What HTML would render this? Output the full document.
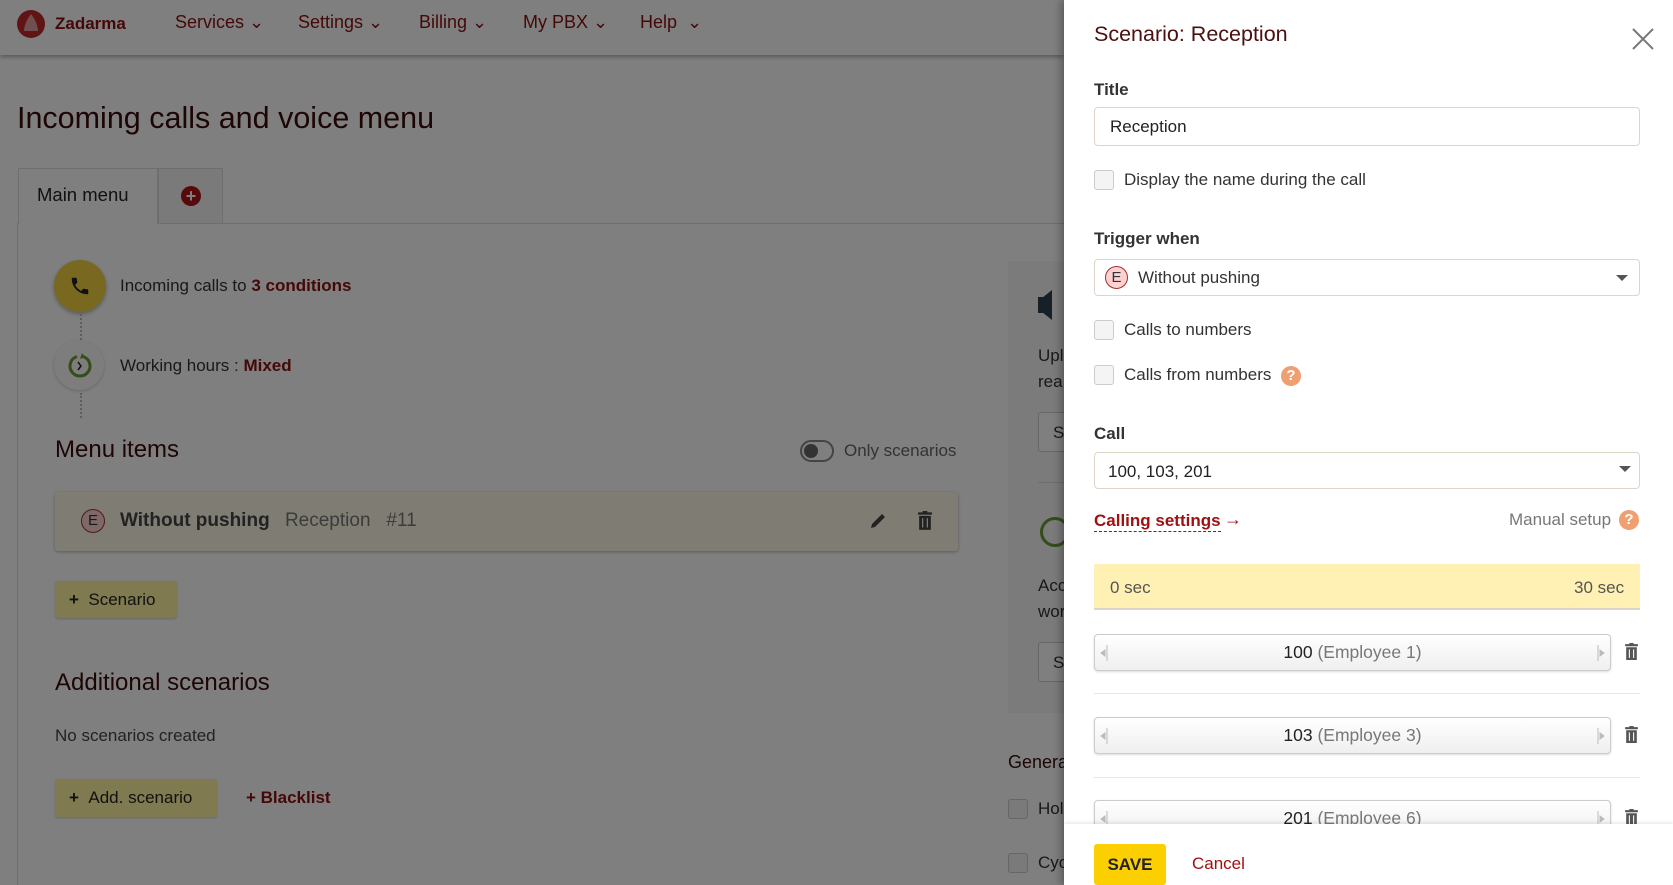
<!DOCTYPE html>
<html><head><meta charset="utf-8"><style>
*{box-sizing:border-box;margin:0;padding:0}
body{width:1673px;height:885px;overflow:hidden;position:relative;font-family:"Liberation Sans",sans-serif;background:#fff;color:#333}
.a{position:absolute}
.nav{left:0;top:0;width:1064px;height:55px;background:#fff;box-shadow:0 2px 4px rgba(0,0,0,.3)}
.nav span{position:absolute;top:12px;font-size:18px;color:#8a1010}
.red{color:#8a1010}
.ov{left:0;top:0;width:1064px;height:885px;background:rgba(0,0,0,.5)}
.cb{width:20px;height:20px;border:1px solid #ccc;border-radius:3px;background:#f4f4f4}
.panel{left:1064px;top:0;width:609px;height:885px;background:#fff;box-shadow:-3px 0 8px rgba(0,0,0,.3)}
.lbl{font-size:17px;font-weight:bold;color:#333}
.inp{border:1px solid #ddd5c8;border-radius:4px;background:#fff}
.txt{font-size:17px;color:#333}
.help{width:20px;height:20px;border-radius:50%;background:#f0a070;color:#fff;font-weight:bold;font-size:15px;text-align:center;line-height:20px}
.row{left:30px;width:517px;height:37px;border:1px solid #ccc;border-radius:4px;background:linear-gradient(#fff,#efefef);box-shadow:0 1px 2px rgba(0,0,0,.15);text-align:center;font-size:17.5px;line-height:35px;color:#222}
.row i{font-style:normal;color:#777}
.row svg{position:absolute;top:10px}
.tr{width:13px;height:17px;left:561px}
</style></head><body>
<div class="a nav">
<svg class="a" style="left:16px;top:9px" width="30" height="30" viewBox="0 0 30 30"><circle cx="15" cy="15" r="14" fill="#c0282d"/><path d="M15 5 C11 10 8 17 8 22 L22 22 C22 17 19 10 15 5Z" fill="#fff" opacity=".55"/></svg>
<span style="left:55px;font-weight:bold;font-size:17px;top:14px">Zadarma</span>
<span style="left:175px">Services ⌄</span>
<span style="left:298px">Settings ⌄</span>
<span style="left:419px">Billing ⌄</span>
<span style="left:523px">My PBX ⌄</span>
<span style="left:640px">Help &nbsp;⌄</span>
</div>
<div class="a" style="left:17px;top:101px;font-size:30.5px;color:#3a0a0a">Incoming calls and voice menu</div>
<div class="a" style="left:18px;top:168px;width:140px;height:56px;border:1px solid #ddd;border-bottom:none;background:#fff"></div>
<div class="a" style="left:37px;top:184px;font-size:18.5px;color:#222">Main menu</div>
<div class="a" style="left:158px;top:168px;width:65px;height:56px;border:1px solid #ddd;background:#f4f4f4"></div>
<div class="a" style="left:181px;top:186px;width:20px;height:20px;border-radius:50%;background:#b01515;color:#fff;font-weight:bold;text-align:center;line-height:20px;font-size:18px">+</div>
<div class="a" style="left:223px;top:223px;width:841px;border-top:1px solid #ddd"></div>
<div class="a" style="left:17px;top:223px;height:662px;border-left:1px solid #ddd"></div>
<div class="a" style="left:54px;top:260px;width:52px;height:52px;border-radius:50%;background:#f0d040;box-shadow:0 2px 4px rgba(0,0,0,.3)"></div>
<svg class="a" style="left:69px;top:275px" width="22" height="22" viewBox="0 0 24 24"><path d="M6.6 10.8c1.4 2.8 3.8 5.1 6.6 6.6l2.2-2.2c.3-.3.7-.4 1-.2 1.1.4 2.3.6 3.6.6.6 0 1 .4 1 1V20c0 .6-.4 1-1 1C10.6 21 3 13.4 3 4c0-.6.4-1 1-1h3.5c.6 0 1 .4 1 1 0 1.3.2 2.5.6 3.6.1.3 0 .7-.2 1L6.6 10.8z" fill="#222"/></svg>
<div class="a" style="left:80px;top:314px;height:26px;border-left:2px dotted #bbb"></div>
<div class="a" style="left:54px;top:340px;width:50px;height:50px;border-radius:50%;background:#fafafa;box-shadow:0 1px 3px rgba(0,0,0,.2)"></div>
<svg class="a" style="left:66px;top:352px" width="28" height="28" viewBox="0 0 28 28"><path d="M11 4.5 A10 10 0 1 0 17 4.5" fill="none" stroke="#6a9a30" stroke-width="3"/><path d="M16 1 L19 5 L14 7Z" fill="#6a9a30"/><path d="M12 10 L15 14 L12 18" fill="none" stroke="#222" stroke-width="1.5"/></svg>
<div class="a" style="left:80px;top:393px;height:25px;border-left:2px dotted #bbb"></div>
<div class="a txt" style="left:120px;top:276px">Incoming calls to <span class="red" style="font-weight:bold">3 conditions</span></div>
<div class="a txt" style="left:120px;top:356px">Working hours : <span class="red" style="font-weight:bold">Mixed</span></div>
<div class="a" style="left:55px;top:436px;font-size:24px;color:#3a0a0a">Menu items</div>
<div class="a" style="left:800px;top:440px;width:34px;height:22px;border-radius:11px;border:2px solid #888"><div style="margin:2px;width:14px;height:14px;border-radius:50%;background:#666"></div></div>
<div class="a" style="left:844px;top:441px;font-size:17px;color:#666">Only scenarios</div>
<div class="a" style="left:55px;top:492px;width:903px;height:59px;background:#fffbe6;border-radius:3px;box-shadow:0 1px 3px rgba(0,0,0,.3)"></div>
<div class="a" style="left:81px;top:509px;width:24px;height:24px;border-radius:50%;border:1.5px solid #a03030;background:#ffd0d0;text-align:center;line-height:22px;font-size:15px">E</div>
<div class="a" style="left:120px;top:510px;font-size:19px;font-weight:bold;color:#444">Without pushing <span style="font-weight:normal;color:#777;margin-left:10px">Reception &nbsp;&nbsp;#11</span></div>
<svg class="a" style="left:868px;top:511px" width="20" height="20" viewBox="0 0 20 20"><path d="M3 17 L4 13 L14 3 L17 6 L7 16Z" fill="#444"/></svg>
<svg class="a" style="left:918px;top:511px" width="14" height="19" viewBox="0 0 12 16"><path d="M0 2h12M4 0.5h4" stroke="#444" stroke-width="2"/><rect x="1" y="4" width="10" height="12" fill="#444"/><path d="M4 6v8M8 6v8" stroke="#fff"/></svg>
<div class="a" style="left:55px;top:581px;width:122px;height:37px;background:#fef4a0;border-radius:3px;box-shadow:0 1px 2px rgba(0,0,0,.2);font-size:17px;line-height:37px;padding-left:14px;color:#222"><b>+</b> &nbsp;Scenario</div>
<div class="a" style="left:55px;top:669px;font-size:24px;color:#3a0a0a">Additional scenarios</div>
<div class="a txt" style="left:55px;top:726px;color:#444">No scenarios created</div>
<div class="a" style="left:55px;top:779px;width:162px;height:38px;background:#fef4a0;border-radius:3px;box-shadow:0 1px 2px rgba(0,0,0,.2);font-size:17px;line-height:38px;padding-left:14px;color:#222"><b>+</b> &nbsp;Add. scenario</div>
<div class="a red" style="left:246px;top:788px;font-size:17px;font-weight:bold">+ Blacklist</div>
<div class="a" style="left:1008px;top:261px;width:60px;height:452px;background:#f6f6f6"></div>
<div class="a" style="left:1038px;top:297px;width:8px;height:16px;background:#2c4050"></div>
<div class="a" style="left:1042px;top:290px;border:8px solid transparent;border-right:10px solid #2c4050;border-left:0;height:30px;width:0"></div>
<div class="a txt" style="left:1038px;top:343px;line-height:26px">Upl<br>rea</div>
<div class="a" style="left:1038px;top:412px;width:40px;height:40px;border:1px solid #ccc;border-radius:3px;background:#fff;font-size:17px;padding:10px 14px">S</div>
<div class="a" style="left:1038px;top:482px;width:30px;border-top:1px solid #ddd"></div>
<div class="a" style="left:1040px;top:517px;width:30px;height:30px;border-radius:50%;border:3px solid #6a9a30"></div>
<div class="a txt" style="left:1038px;top:573px;line-height:26px">Acc<br>wor</div>
<div class="a" style="left:1038px;top:642px;width:40px;height:40px;border:1px solid #ccc;border-radius:3px;background:#fff;font-size:17px;padding:10px 14px">S</div>
<div class="a" style="left:1008px;top:752px;font-size:18px;color:#3a0a0a">Genera</div>
<div class="a cb" style="left:1008px;top:799px"></div><div class="a txt" style="left:1038px;top:799px">Hol</div>
<div class="a cb" style="left:1008px;top:853px"></div><div class="a txt" style="left:1038px;top:853px">Cyc</div>
<div class="a ov"></div>
<div class="a panel">
<div class="a" style="left:30px;top:22px;font-size:21.5px;color:#4a1010">Scenario: Reception</div>
<svg class="a" style="left:568px;top:28px" width="22" height="22" viewBox="0 0 22 22"><path d="M1 1L21 21M21 1L1 21" stroke="#777" stroke-width="2"/></svg>
<div class="a lbl" style="left:30px;top:80px">Title</div>
<div class="a inp" style="left:30px;top:107px;width:546px;height:39px"></div>
<div class="a txt" style="left:46px;top:117px;color:#222">Reception</div>
<div class="a cb" style="left:30px;top:170px"></div><div class="a txt" style="left:60px;top:170px">Display the name during the call</div>
<div class="a lbl" style="left:30px;top:229px">Trigger when</div>
<div class="a inp" style="left:30px;top:259px;width:546px;height:37px"></div>
<div class="a" style="left:41px;top:266px;width:23px;height:23px;border-radius:50%;border:1.5px solid #a03030;background:#ffd0d0;text-align:center;line-height:21px;font-size:15px">E</div>
<div class="a txt" style="left:74px;top:268px">Without pushing</div>
<div class="a" style="left:552px;top:275px;border:6px solid transparent;border-top-color:#555"></div>
<div class="a cb" style="left:30px;top:320px"></div><div class="a txt" style="left:60px;top:320px">Calls to numbers</div>
<div class="a cb" style="left:30px;top:365px"></div><div class="a txt" style="left:60px;top:365px">Calls from numbers</div>
<div class="a help" style="left:217px;top:366px">?</div>
<div class="a lbl" style="left:30px;top:424px">Call</div>
<div class="a inp" style="left:30px;top:452px;width:546px;height:37px"></div>
<div class="a txt" style="left:44px;top:462px;color:#222">100, 103, 201</div>
<div class="a" style="left:555px;top:466px;border:6px solid transparent;border-top-color:#555"></div>
<div class="a" style="left:30px;top:511px;font-size:17px;font-weight:bold;color:#a01010;border-bottom:1px dashed #a01010">Calling settings</div>
<div class="a" style="left:160px;top:509px;font-size:18px;color:#a01010">→</div>
<div class="a txt" style="left:445px;top:510px;color:#777">Manual setup</div>
<div class="a help" style="left:555px;top:510px">?</div>
<div class="a" style="left:30px;top:564px;width:546px;height:46px;background:#fff0b3;border-bottom:2px solid #ddd5c8"></div>
<div class="a txt" style="left:46px;top:578px;color:#555">0 sec</div>
<div class="a txt" style="left:510px;top:578px;color:#555">30 sec</div>
<div class="a row" style="top:634px"><svg style="left:5px" width="10" height="16"><path d="M7 0v16M1 8l4-3v6z" stroke="#bbb" fill="#bbb"/></svg>100 <i>(Employee 1)</i><svg style="right:5px" width="10" height="16"><path d="M3 0v16M9 8l-4-3v6z" stroke="#bbb" fill="#bbb"/></svg></div>
<svg class="a tr" style="top:643px" viewBox="0 0 12 16"><path d="M0 2h12M4 0.5h4" stroke="#555" stroke-width="2"/><rect x="1" y="4" width="10" height="12" fill="#555"/><path d="M4 6v8M8 6v8" stroke="#fff"/></svg>
<div class="a" style="left:30px;top:693px;width:546px;border-top:1px solid #e6e6e6"></div>
<div class="a row" style="top:717px"><svg style="left:5px" width="10" height="16"><path d="M7 0v16M1 8l4-3v6z" stroke="#bbb" fill="#bbb"/></svg>103 <i>(Employee 3)</i><svg style="right:5px" width="10" height="16"><path d="M3 0v16M9 8l-4-3v6z" stroke="#bbb" fill="#bbb"/></svg></div>
<svg class="a tr" style="top:726px" viewBox="0 0 12 16"><path d="M0 2h12M4 0.5h4" stroke="#555" stroke-width="2"/><rect x="1" y="4" width="10" height="12" fill="#555"/><path d="M4 6v8M8 6v8" stroke="#fff"/></svg>
<div class="a" style="left:30px;top:777px;width:546px;border-top:1px solid #e6e6e6"></div>
<div class="a row" style="top:800px"><svg style="left:5px" width="10" height="16"><path d="M7 0v16M1 8l4-3v6z" stroke="#bbb" fill="#bbb"/></svg>201 <i>(Employee 6)</i><svg style="right:5px" width="10" height="16"><path d="M3 0v16M9 8l-4-3v6z" stroke="#bbb" fill="#bbb"/></svg></div>
<svg class="a tr" style="top:809px" viewBox="0 0 12 16"><path d="M0 2h12M4 0.5h4" stroke="#555" stroke-width="2"/><rect x="1" y="4" width="10" height="12" fill="#555"/><path d="M4 6v8M8 6v8" stroke="#fff"/></svg>
<div class="a" style="left:0;top:824px;width:609px;height:61px;background:#fff;box-shadow:0 -2px 3px rgba(0,0,0,.08)"></div>
<div class="a" style="left:30px;top:844px;width:72px;height:41px;background:#fccf00;border-radius:3px;font-size:17px;font-weight:bold;line-height:41px;text-align:center;color:#222">SAVE</div>
<div class="a" style="left:128px;top:854px;font-size:17px;color:#a01010">Cancel</div>
</div>
</body></html>
